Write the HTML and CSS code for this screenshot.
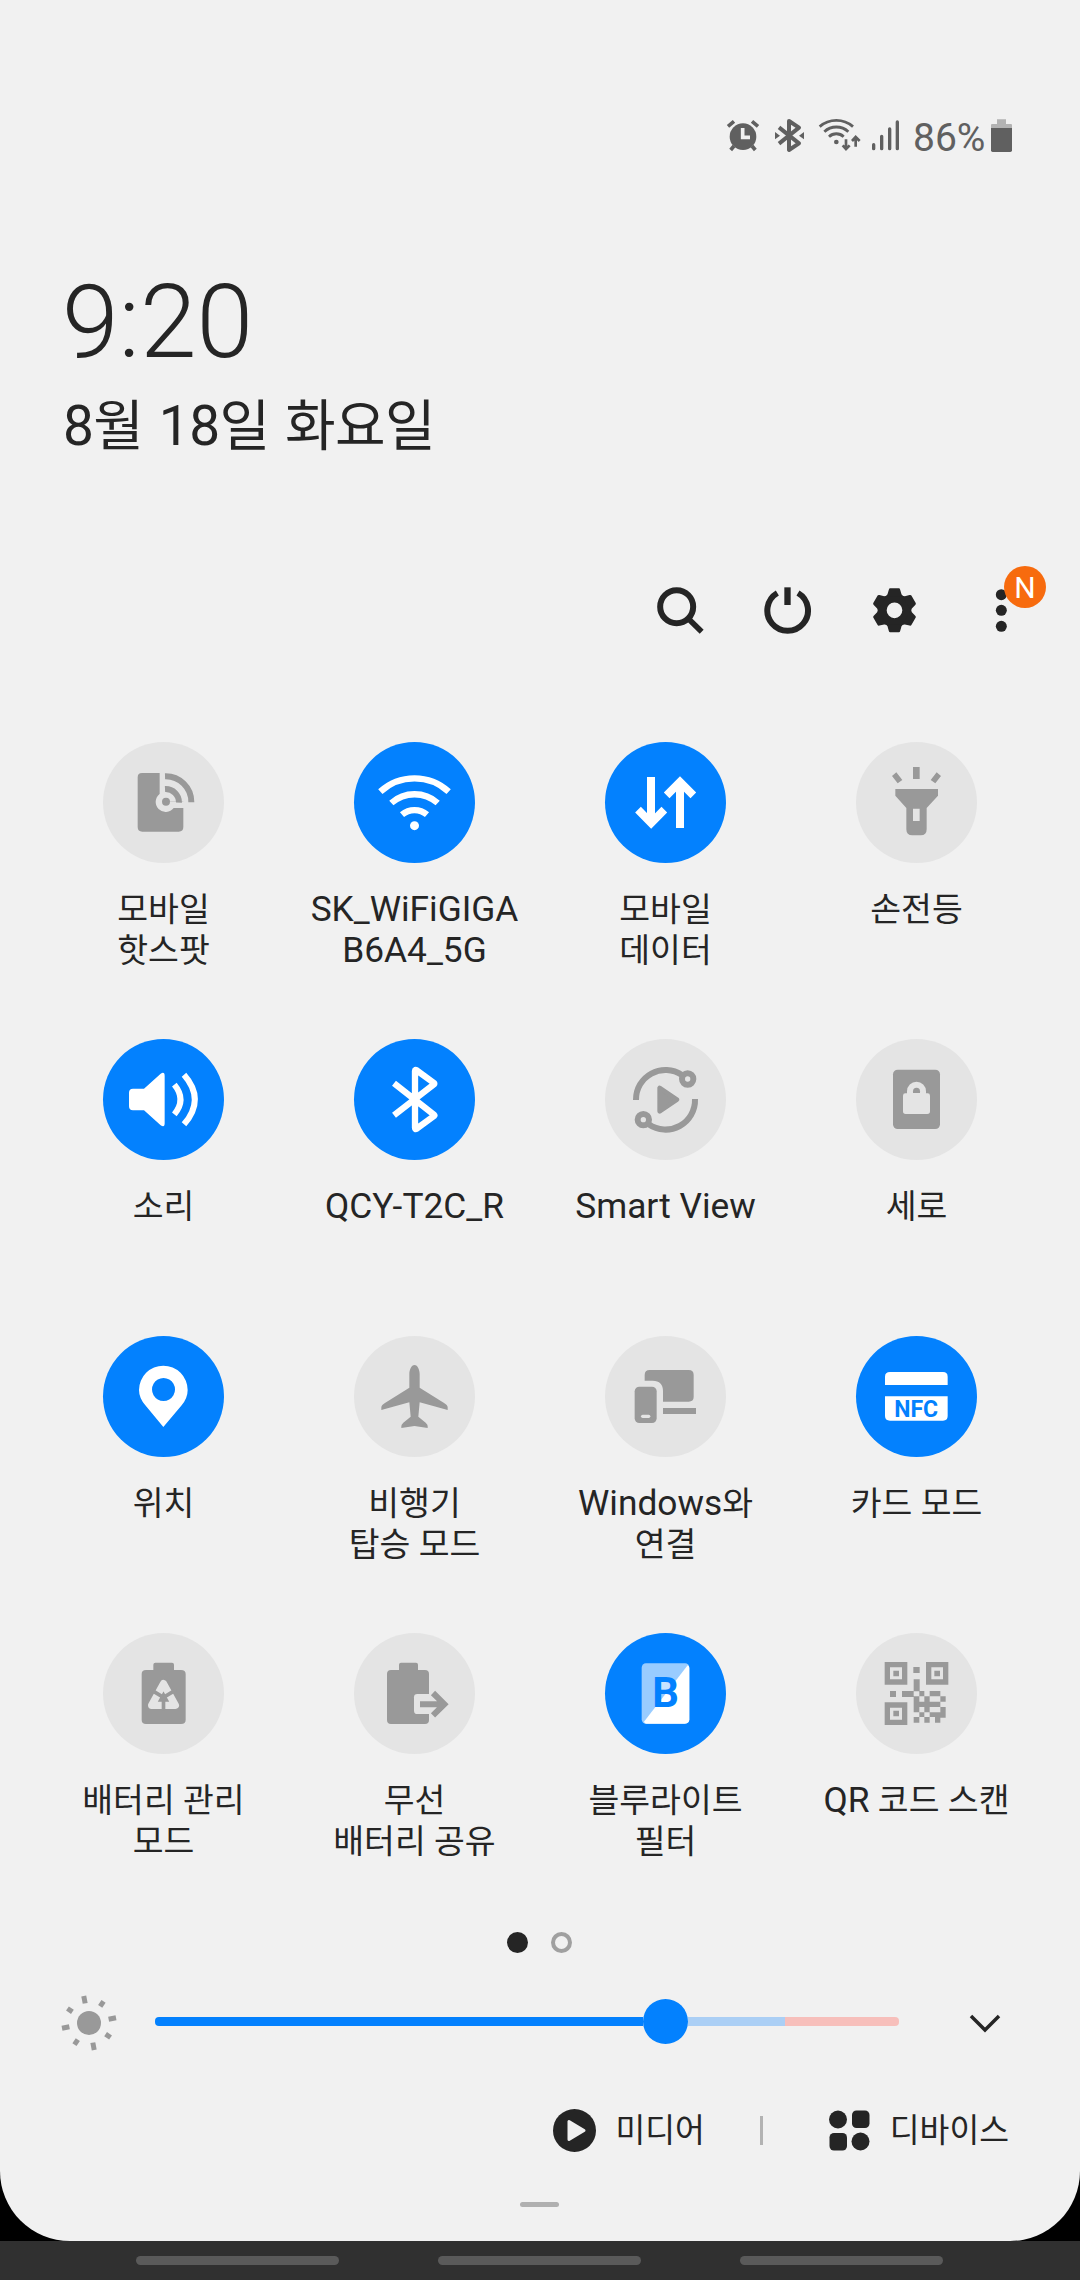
FILE: index.html
```html
<!DOCTYPE html>
<html lang="ko">
<head>
<meta charset="utf-8">
<title>빠른 설정</title>
<link rel="stylesheet" href="styles.css">
</head>
<body>
<div class="screen">
  <main class="panel">
    <div class="status">
      <svg class="s-alarm" viewBox="78 48 105 120"><g fill="none" stroke="#606060"><circle cx="129" cy="110" r="40" fill="#606060" stroke="none"/><path d="M84 79 102 64M174 79 156 64" stroke-width="11"/><path d="M102 138 92 150M156 138 166 150" stroke-width="11"/><path d="M128 84V112H150" stroke="#f1f1f1" stroke-width="11"/></g></svg>
      <svg class="s-bt" viewBox="222 48 93 120"><g fill="none" stroke="#606060" stroke-width="12" stroke-linejoin="round"><path d="M237 82 297 130 267 150V63L297 83 237 131"/></g><path d="M225 96 240 107 225 118ZM312 96 297 107 312 118Z" fill="#606060"/></svg>
      <svg class="s-wifi" viewBox="354 48 129 120"><g fill="none" stroke="#606060" stroke-width="8.5"><path d="M359 80A76 76 0 0 1 459 80"/><path d="M373 95A53 53 0 0 1 445 95"/><path d="M387 110A32 32 0 0 1 431 110"/><path d="M438 118V146M428 136 438 147 449 136M467 140V112M456 123 467 111 479 123" stroke-width="8"/></g><circle cx="409" cy="126" r="7" fill="#606060"/></svg>
      <svg class="s-signal" viewBox="513 48 87 120"><path d="M521 134V146M545 109V146M569 87V146M592 66V146" stroke="#606060" stroke-width="10" stroke-linecap="round"/></svg>
      <span class="percent">86%</span>
      <svg class="s-battery" viewBox="873 48 66 120"><path d="M891 58h27v14h15q3 0 3 3v9h-63v-9q0-3 3-3h15Z" fill="#b3b3b3"/><path d="M873 84h63v67q0 5-5 5h-53q-5 0-5-5Z" fill="#606060"/></svg>
    </div>

    <header class="clock">
      <div class="time">9:20</div>
      <div class="date">8월 18일 화요일</div>
    </header>

    <nav class="actions">
      <svg viewBox="111 141 144 144"><g fill="none" stroke="#252525"><circle cx="170" cy="200" r="49.5" stroke-width="18"/><path d="M203 234 245 275" stroke-width="17"/></g></svg>
      <svg viewBox="432 141 144 144"><path d="M472 159A61 61 0 1 0 534 159" fill="none" stroke="#252525" stroke-width="18"/><path d="M493 142h19v53h-19Z" fill="#252525"/></svg>
      <svg viewBox="753 141 144 144"><g transform="translate(823.5 211)"><circle r="37" fill="none" stroke="#252525" stroke-width="27"/><g fill="#252525"><path id="tooth" d="M-13-66H13Q16-66 17-62L21-48 25-42H-25L-21-48-17-62Q-16-66-13-66Z"/><use href="#tooth" transform="rotate(60)"/><use href="#tooth" transform="rotate(120)"/><use href="#tooth" transform="rotate(180)"/><use href="#tooth" transform="rotate(240)"/><use href="#tooth" transform="rotate(300)"/></g></g></svg>
      <div class="more"><svg viewBox="1074 141 144 144"><g fill="#252525"><circle cx="1144" cy="164" r="16.5"/><circle cx="1144" cy="211" r="16.5"/><circle cx="1144" cy="259" r="16.5"/></g></svg><span class="badge">N</span></div>
    </nav>

    <section class="tiles">
      <div class="tile"><svg class="disc" viewBox="129 66 363 363"><path d="M246 159H299V245H370V321Q370 335 356 335H247Q233 335 233 321V172Q233 159 246 159Z" fill="#999"/><path d="M299 222A30 30 0 1 0 341 264V246H318V222Z" fill="#e4e4e4"/><path d="M334 246H372V264H334Z" fill="#e4e4e4"/><circle cx="318" cy="245" r="12" fill="#999"/><g fill="none" stroke="#999" stroke-width="18"><path d="M315 207A40 40 0 0 1 357 248"/><path d="M315 169A77 77 0 0 1 394 247"/></g></svg><p>모바일<br>핫스팟</p></div>
      <div class="tile"><svg class="disc on" viewBox="882 66 363 363"><g fill="none" stroke="#fff" stroke-width="19"><path d="M961 215A152 152 0 0 1 1166 215"/><path d="M994 249A105 105 0 0 1 1133 249"/><path d="M1026 284A58 58 0 0 1 1101 284"/></g><circle cx="1063.500" cy="317" r="13.500" fill="#fff"/></svg><p><span class="latin">SK_WiFiGIGA<br>B6A4_5G</span></p></div>
      <div class="tile"><svg class="disc on" viewBox="195 66 363 363"><g fill="none" stroke="#fff" stroke-width="24"><path d="M333 171V308"/><path d="M294 269 333.500 309 373 269"/><path d="M420 324V187"/><path d="M380 226 420 186 460 226"/></g></svg><p>모바일<br>데이터</p></div>
      <div class="tile"><svg class="disc" viewBox="948 66 363 363"><g fill="#999"><path d="M1066 207H1194V227L1160 264V328Q1160 346 1142 346H1117Q1099 346 1099 328V264L1066 227Z"/><path d="M1119 141h20v36h-20ZM1056 168 1069 157 1087 180 1073 190ZM1203 168 1190 157 1172 180 1186 190Z"/></g><path d="M1119 266h20v37h-20Z" fill="#e4e4e4"/></svg><p>손전등</p></div>

      <div class="tile"><svg class="disc on" viewBox="129 57 363 363"><path d="M219 206H252L302 161Q314 153 314 168V310Q314 324 302 316L252 271H219Q207 271 207 259V218Q207 206 219 206Z" fill="#fff"/><g fill="none" stroke="#fff" stroke-width="18"><path d="M343 194Q380 239 343 283"/><path d="M372 164Q437 238 372 313"/></g></svg><p>소리</p></div>
      <div class="tile"><svg class="disc on" viewBox="882 57 363 363"><path d="M1002 190 1122 284Q1124 286 1122 288L1070 326Q1065 329 1065 323V153Q1065 148 1070 151L1122 189Q1124 191 1122 193L1002 286" fill="none" stroke="#fff" stroke-width="19" stroke-linejoin="round"/></svg><p><span class="latin">QCY-T2C_R</span></p></div>
      <div class="tile"><svg class="disc" viewBox="195 57 363 363"><g fill="none" stroke="#999" stroke-width="18"><path d="M288 240A88.500 88.500 0 0 1 426 165"/><path d="M465 237A88.500 88.500 0 0 1 326 313"/><circle cx="443" cy="177" r="17"/><circle cx="310" cy="299" r="17"/></g><path d="M359 204V274L411 239Z" fill="#999" stroke="#999" stroke-width="14" stroke-linejoin="round"/></svg><p><span class="latin">Smart View</span></p></div>
      <div class="tile"><svg class="disc" viewBox="948 57 363 363"><rect x="1059" y="149" width="141" height="178" rx="14" fill="#999"/><path d="M1101 220V214A28.500 28.500 0 0 1 1158 214V220H1163Q1170 220 1170 227V274Q1170 282 1162 282H1097Q1089 282 1089 274V227Q1089 220 1096 220Z" fill="#e4e4e4"/><path d="M1119 219V214A10.500 10.500 0 0 1 1140 214V219Z" fill="#999"/></svg><p>세로</p></div>

      <div class="tile"><svg class="disc on" viewBox="129 48 363 363"><path fill-rule="evenodd" d="M310 137A73 73 0 0 1 383 210Q383 234 365 256L310 321 256 256Q237 234 237 210A73 73 0 0 1 310 137ZM310.500 174a34.500 34.500 0 1 0 .1 0Z" fill="#fff"/></svg><p>위치</p></div>
      <div class="tile"><svg class="disc" viewBox="882 48 363 363"><path d="M1063.500 135C1073 135 1079 150 1079 162V203L1151 248Q1163 255 1163 262V270L1079 247 1075 290 1097 308Q1103 313 1103 318V324L1063.500 318 1024 324V318Q1024 313 1030 308L1052 290 1048 247 964 270V262Q964 255 976 248L1048 203V162C1048 150 1054 135 1063.500 135Z" fill="#999"/></svg><p>비행기<br>탑승 모드</p></div>
      <div class="tile"><svg class="disc" viewBox="195 48 363 363"><path d="M314 182V165Q314 150 329 150H446Q461 150 461 165V231Q461 245 446 245H369V214Q369 182 338 182ZM369 264H468V282H369Z" fill="#999"/><rect x="284" y="200" width="66" height="109" rx="14" fill="#999"/><rect x="303" y="284" width="28" height="10" rx="5" fill="#e4e4e4"/></svg><p><span class="latin">Windows</span>와<br>연결</p></div>
      <div class="tile"><svg class="disc on" viewBox="948 48 363 363"><path d="M1050 156H1209Q1223 156 1223 170V195H1035V170Q1035 156 1050 156ZM1035 229H1223V288Q1223 302 1209 302H1050Q1035 302 1035 288Z" fill="#fff"/><text class="glyph" x="1128.500" y="290" font-size="69" textLength="131" text-anchor="middle">NFC</text></svg><p>카드 모드</p></div>

      <div class="tile"><svg class="disc" viewBox="129 69 363 363"><path d="M280 180V164Q280 158 286 158H336Q342 158 342 164V180H363Q377 180 377 192V330Q377 342 363 342H258Q245 342 245 330V192Q245 180 258 180Z" fill="#999"/><path d="M310.500 221 346 286H275Z" fill="none" stroke="#e4e4e4" stroke-width="22" stroke-linejoin="round"/><path d="M310.500 262V301M310.500 262 272 239M310.500 262 349 239" stroke="#999" stroke-width="11"/></svg><p>배터리 관리<br>모드</p></div>
      <div class="tile"><svg class="disc" viewBox="882 69 363 363"><path d="M1017 180V164Q1017 158 1023 158H1068Q1074 158 1074 164V180H1095Q1107 180 1107 192V330Q1107 342 1095 342H993Q981 342 981 330V192Q981 180 993 180Z" fill="#999"/><path d="M1108 252H1072Q1062 252 1062 262V302Q1062 312 1072 312H1108Z" fill="#e4e4e4"/><path d="M1080 282.500H1150M1119 249 1153 282.500 1119 316" fill="none" stroke="#999" stroke-width="18"/></svg><p>무선<br>배터리 공유</p></div>
      <div class="tile"><svg class="disc on" viewBox="195 69 363 363"><rect x="305" y="160" width="143" height="181" rx="13" fill="#9cf"/><path d="M443 166Q448 168 448 174V328Q448 341 434 341H319Q314 341 312 335Z" fill="#fff"/><path d="M358 212H396V242H358Z" fill="#c8e3ff"/><text class="glyph" x="337" y="291" font-size="130" textLength="80" lengthAdjust="spacingAndGlyphs">B</text></svg><p>블루라이트<br>필터</p></div>
      <div class="tile"><svg class="disc" viewBox="948 69 363 363"><g fill="none" stroke="#999" stroke-width="16"><path d="M1042 164h52v52h-52ZM1166 164h51v52h-51ZM1042 285h52v52h-52Z"/></g><path d="M1060 182h17v17h-17ZM1183 182h17v17h-17ZM1060 302h17v17h-17ZM1120 171h19v18h-19ZM1121 208h18v36h-18ZM1050 243h18v18h-18ZM1086 243h35v18h-35ZM1138 243h15v16h-15ZM1169 243h32v16h-32ZM1121 259h17v48h-17ZM1153 259h16v16h-16ZM1201 259h16v16h-16ZM1138 275h15v16h-15ZM1169 275h32v16h-32ZM1153 291h16v16h-16ZM1153 275h16v16h-16ZM1201 291h16v32h-16ZM1138 307h15v14h-15ZM1169 307h16v14h-16ZM1185 307h16v14h-16ZM1121 321h17v17h-17ZM1153 321h16v17h-16ZM1185 321h16v17h-16Z" fill="#999"/></svg><p><span class="latin">QR</span> 코드 스캔</p></div>
    </section>

    <div class="pages"><i class="current"></i><i></i></div>

    <div class="brightness">
      <svg class="sun" viewBox="-28 -28 56 56"><g fill="#999"><circle r="12"/><g transform="rotate(-11)"><path id="ray" d="M-2.500-27.500h5v7.500h-5Z"/><use href="#ray" transform="rotate(90)"/><use href="#ray" transform="rotate(180)"/><use href="#ray" transform="rotate(270)"/><path d="M-2.500-26h5v6h-5Z" transform="rotate(45)"/><path d="M-2.500-26h5v6h-5Z" transform="rotate(135)"/><path d="M-2.500-26h5v6h-5Z" transform="rotate(225)"/><path d="M-2.500-26h5v6h-5Z" transform="rotate(315)"/></g></g></svg>
      <div class="slider"><span class="fill"></span><span class="thumb"></span><span class="safe"></span><span class="high"></span></div>
      <svg class="chevron" viewBox="0 0 34 22"><path d="M3 3 17 17 31 3" fill="none" stroke="#252525" stroke-width="3.500"/></svg>
    </div>

    <footer class="links">
      <svg class="play" viewBox="0 0 43 43"><circle cx="21.500" cy="21.500" r="21.500" fill="#252525"/><path d="M16 12.500V30.500L31 21.500Z" fill="#f1f1f1" stroke="#f1f1f1" stroke-width="3" stroke-linejoin="round"/></svg>
      <span>미디어</span>
      <i class="divider"></i>
      <svg class="devices" viewBox="0 0 41 41"><g fill="#252525"><circle cx="9" cy="9.500" r="9"/><rect x="23" y=".5" width="17.500" height="17.500" rx="4.500"/><rect x=".5" y="23" width="17.500" height="17.500" rx="4.500"/><circle cx="31.500" cy="31.500" r="9"/></g></svg>
      <span>디바이스</span>
    </footer>
    <div class="handle"></div>
  </main>
  <div class="navbar"><i></i><i></i><i></i></div>
</div>
</body>
</html>
```

FILE: styles.css
```css
* { box-sizing: border-box; margin: 0; padding: 0; }

body {
  background: #000;
  color: #252525;
  font-family: Roboto, "Noto Sans CJK KR", sans-serif;
}

svg { display: block; flex: none; }

.screen {
  display: flex;
  flex-direction: column;
  width: 1080px;
  height: 2280px;
  overflow: hidden;
}

.panel {
  display: flex;
  flex-direction: column;
  height: 2241px;
  padding-top: 116px;
  border-radius: 0 0 70px 70px;
  background: #f1f1f1;
}

.status {
  display: flex;
  justify-content: flex-end;
  height: 40px;
  padding-right: 67px;
  color: #606060;
}
.status svg { height: 40px; }
.s-alarm { width: 35px; margin-right: 13px; }
.s-bt { width: 31px; margin-right: 13px; }
.s-wifi { width: 43px; margin-right: 10px; }
.s-signal { width: 29px; }
.percent {
  width: 91px;
  padding-left: 13px;
  font-size: 39px;
  line-height: 45px;
}
.s-battery { width: 22px; }

.clock { height: 431px; padding: 106px 0 0 62px; }
.time {
  height: 120px;
  font-size: 102px;
  font-weight: 300;
  line-height: 120px;
}
.date {
  padding: 8px 0 0 1px;
  font-size: 55px;
  line-height: 72px;
  letter-spacing: -0.6px;
  word-spacing: 2.5px;
  white-space: nowrap;
}

.actions {
  display: flex;
  justify-content: flex-end;
  gap: 59px;
  height: 155px;
  padding-right: 54px;
}
.actions svg { width: 48px; height: 48px; }
.more { position: relative; width: 48px; height: 48px; }
.badge {
  position: absolute;
  top: -21px;
  left: 26px;
  width: 42px;
  height: 42px;
  border-radius: 50%;
  background: #f76b0e;
  color: #fff;
  font-size: 30px;
  line-height: 43px;
  text-align: center;
}

.tiles {
  display: grid;
  grid-template-columns: repeat(4, 251px);
  grid-auto-rows: 297px;
  justify-content: center;
  height: 1190px;
}
.tile {
  display: flex;
  flex-direction: column;
  align-items: center;
  gap: 26px;
}
.disc {
  width: 121px;
  height: 121px;
  border-radius: 50%;
  background: #e4e4e4;
}
.disc.on { background: #0381fe; }
.glyph { fill: #0381fe; font-weight: 700; }
.tile p {
  font-size: 33.5px;
  line-height: 41px;
  text-align: center;
  white-space: nowrap;
}
.latin { font-size: 35.3px; }

.pages { display: flex; justify-content: center; gap: 23px; height: 63px; padding-right: 2px; }
.pages i {
  width: 21px;
  height: 21px;
  border: 4px solid #a0a0a0;
  border-radius: 50%;
}
.pages .current { border: 0; background: #252525; }

.brightness {
  display: flex;
  align-items: center;
  height: 56px;
  padding-left: 61px;
}
.sun { width: 56px; height: 56px; }
.slider {
  display: flex;
  align-items: center;
  width: 744px;
  height: 45px;
  margin: 0 69px 3px 38px;
}
.fill { width: 488px; height: 9px; border-radius: 4px 0 0 4px; background: #0381fe; }
.thumb { width: 45px; height: 45px; border-radius: 50%; background: #0381fe; }
.safe { width: 97px; height: 9px; background: #abcff5; }
.high { flex: 1; height: 9px; border-radius: 0 4px 4px 0; background: #f7bfbb; }
.chevron { width: 34px; height: 22px; margin-top: 2px; }

.links {
  display: flex;
  align-items: center;
  justify-content: flex-end;
  height: 46px;
  margin-top: 56px;
  padding-right: 71px;
  font-size: 32.4px;
  line-height: 46px;
}
.links span { padding-top: 2px; }
.play { width: 43px; height: 43px; margin-right: 19px; }
.divider { width: 3px; height: 29px; margin: 0 66px 0 55px; background: #b3b3b3; }
.devices { width: 41px; height: 41px; margin-right: 20px; }

.handle {
  width: 39px;
  height: 5px;
  margin: 49px 0 0 520px;
  border-radius: 3px;
  background: #b0b0b0;
}

.navbar {
  display: flex;
  justify-content: center;
  gap: 99px;
  height: 39px;
  padding: 15px 2px 0 0;
  background: #303030;
}
.navbar i { width: 203px; height: 9px; border-radius: 5px; background: #5a5a5a; }
```
